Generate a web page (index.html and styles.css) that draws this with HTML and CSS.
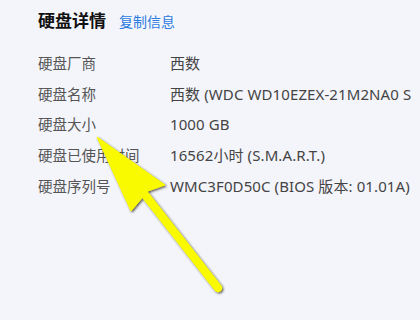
FILE: index.html
```html
<!DOCTYPE html>
<html lang="zh-CN">
<head>
<meta charset="utf-8">
<link rel="stylesheet" href="styles.css">
</head>
<body>
<div class="panel">
  <div class="header">
    <h1 class="title">硬盘详情</h1>
    <a class="copy">复制信息</a>
  </div>
  <div class="grid">
    <div class="label">硬盘厂商</div><div class="value">西数</div>
    <div class="label">硬盘名称</div><div class="value">西数 (WDC WD10EZEX-21M2NA0 S</div>
    <div class="label">硬盘大小</div><div class="value">1000 GB</div>
    <div class="label">硬盘已使用时间</div><div class="value">16562小时 (S.M.A.R.T.)</div>
    <div class="label">硬盘序列号</div><div class="value">WMC3F0D50C (BIOS 版本: 01.01A)</div>
  </div>
</div>
<svg class="arrow" width="420" height="320" viewBox="0 0 420 320">
  <defs>
    <filter id="sh" x="-20%" y="-20%" width="140%" height="140%">
      <feDropShadow dx="1.2" dy="1.2" stdDeviation="1.2" flood-color="#3a3a2a" flood-opacity="0.85"/>
    </filter>
  </defs>
  <g filter="url(#sh)" fill="#f9f900" stroke="#f9f900">
    <line x1="146" y1="196" x2="218" y2="288" stroke-width="8.5" stroke-linecap="round"/>
    <polygon points="97,137 165,185 148,191 131,211" stroke-width="1" stroke-linejoin="round"/>
  </g>
</svg>
</body>
</html>
```
FILE: styles.css
```css
html, body {
  margin: 0;
  padding: 0;
  width: 420px;
  height: 320px;
  overflow: hidden;
  background: #f4f5fb;
}
body {
  font-family: "Noto Sans", "Noto Sans CJK SC", sans-serif;
  position: relative;
}
.panel {
  padding: 10px 0 0 38px;
}
.header {
  display: flex;
  align-items: baseline;
  gap: 13px;
  height: 22px;
}
.title {
  margin: 0;
  font-size: 17px;
  font-weight: 700;
  color: #111;
  line-height: 22px;
}
.copy {
  font-size: 14px;
  color: #2a7be0;
  line-height: 22px;
}
.grid {
  display: grid;
  grid-template-columns: 132px auto;
  grid-auto-rows: 30.75px;
  margin-top: 15px;
  align-items: center;
}
.label {
  font-size: 14.5px;
  color: #555;
  white-space: nowrap;
}
.value {
  font-size: 15px;
  color: #444;
  white-space: nowrap;
  letter-spacing: 0.1px;
}
.arrow {
  position: absolute;
  left: 0;
  top: 0;
  pointer-events: none;
}
```
